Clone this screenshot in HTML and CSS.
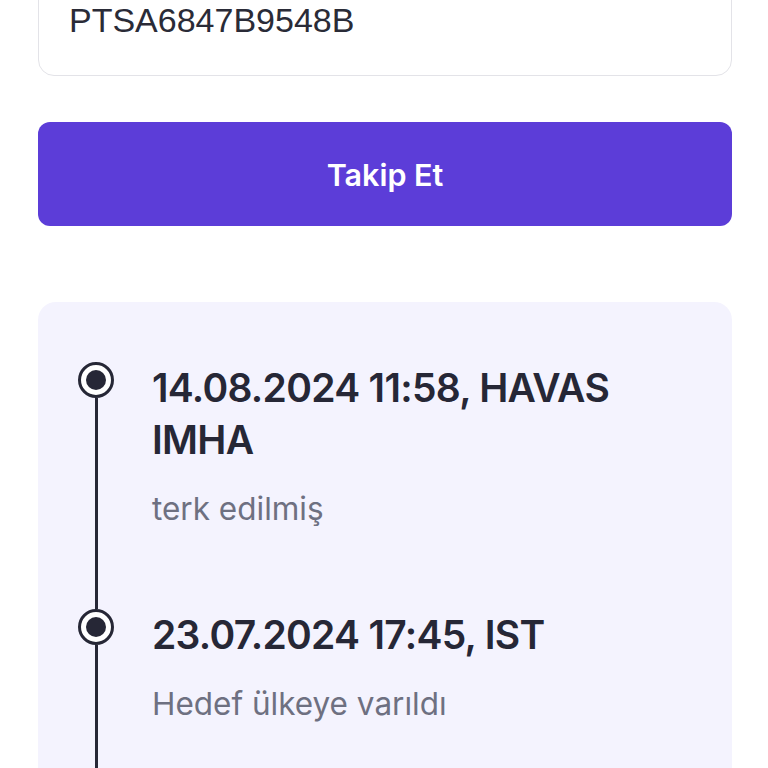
FILE: index.html
```html
<!DOCTYPE html>
<html lang="tr">
<head>
	<meta charset="UTF-8">
	<title>Kargo Takip</title>
	<link rel="stylesheet" href="styles.css">
</head>
<body>
	<div class="page">
		<div class="field">PTSA6847B9548B</div>
		<button class="btn" type="button">Takip Et</button>

		<div class="card">
			<div class="item">
				<div class="marker">
					<span class="dot"><i></i></span>
					<span class="line"></span>
				</div>
				<div class="body">
					<h3>14.08.2024 11:58, HAVAS IMHA</h3>
					<p>terk edilmiş</p>
				</div>
			</div>
			<div class="item">
				<div class="marker">
					<span class="dot"><i></i></span>
					<span class="line"></span>
				</div>
				<div class="body">
					<h3>23.07.2024 17:45, IST</h3>
					<p>Hedef ülkeye varıldı</p>
				</div>
			</div>
		</div>
	</div>
</body>
</html>
```

FILE: styles.css
```css
* {
	padding: 0;
	margin: 0;
	box-sizing: border-box;
}
body {
	background: #fff;
	font-family: Inter, "Noto Sans", sans-serif;
	color: #262736;
	overflow: hidden;
}
.page {
	margin-top: -28px;
	padding: 0 36px 0 38px;
}
.field {
	height: 104px;
	padding: 28px 30px 0;
	border: 1.5px solid #e3e3e8;
	border-radius: 16px;
	font: 400 34px/38px "Liberation Sans", Arial, sans-serif;
	color: #2a2b37;
}
.btn {
	display: flex;
	align-items: center;
	justify-content: center;
	width: 100%;
	height: 104px;
	margin-top: 46px;
	border: 0;
	border-radius: 12px;
	background: #5c3dd8;
	color: #fff;
	font: 600 30.5px Inter, sans-serif;
}
.card {
	margin-top: 76px;
	padding: 60px 40px 0;
	min-height: 520px;
	border-radius: 18px;
	background: #f4f3fe;
}
.item {
	display: grid;
	grid-template-columns: 36px 1fr;
	column-gap: 38px;
}
.marker {
	display: flex;
	flex-direction: column;
	align-items: center;
}
.dot {
	display: flex;
	align-items: center;
	justify-content: center;
	width: 36px;
	height: 36px;
	border: 3.5px solid #262736;
	border-radius: 50%;
	background: #fff;
}
.dot i {
	width: 20px;
	height: 20px;
	border-radius: 50%;
	background: #262736;
}
.line {
	flex: 1;
	width: 3px;
	background: #262736;
}
.body {
	padding-bottom: 80px;
}
.body h3 {
	font-size: 39px;
	line-height: 52px;
	font-weight: 600;
	letter-spacing: -0.7px;
}
.body p {
	margin-top: 23px;
	font-size: 31.5px;
	line-height: 40px;
	color: #6e7081;
}
```
